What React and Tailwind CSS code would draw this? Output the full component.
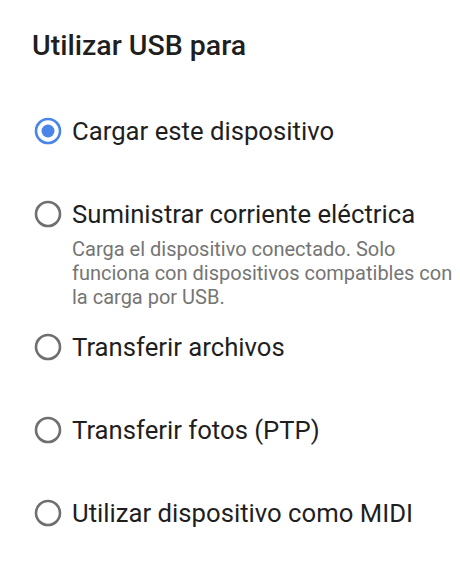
import React, { useState } from 'react';

const options = [
  { id: 'charge', label: 'Cargar este dispositivo' },
  {
    id: 'power',
    label: 'Suministrar corriente eléctrica',
    desc: 'Carga el dispositivo conectado. Solo funciona con dispositivos compatibles con la carga por USB.',
  },
  { id: 'mtp', label: 'Transferir archivos' },
  { id: 'ptp', label: 'Transferir fotos (PTP)' },
  { id: 'midi', label: 'Utilizar dispositivo como MIDI' },
];

const Radio = ({ checked }) => (
  <svg width="28" height="28" viewBox="0 0 28 28" className="shrink-0">
    <circle
      cx="14"
      cy="14"
      r="12"
      fill="none"
      stroke={checked ? '#4a86e8' : '#6f6f6f'}
      strokeWidth="2.6"
    />
    {checked && <circle cx="14" cy="14" r="6.5" fill="#4a86e8" />}
  </svg>
);

export default function App() {
  const [selected, setSelected] = useState('charge');

  return (
    <div
      className="w-[460px] h-[565px] bg-white text-[#1f1f1f] overflow-hidden"
      style={{ fontFamily: 'Roboto, "Noto Sans", sans-serif' }}
    >
      <h1 className="pl-[32px] pt-[28px] text-[28.5px] leading-[36px] font-medium">Utilizar USB para</h1>

      <div className="mt-[52px] pl-[34px] pr-[2px] flex flex-col">
        {options.map((opt, i) => (
          <div
            key={opt.id}
            onClick={() => setSelected(opt.id)}
            className={`cursor-pointer ${i === 0 ? '' : options[i - 1].desc ? 'mt-[23px]' : 'mt-[53px]'}`}
          >
            <div className="flex items-center gap-[10px] h-[30px]">
              <Radio checked={selected === opt.id} />
              <span className="text-[25.7px] leading-[30px] whitespace-nowrap">{opt.label}</span>
            </div>
            {opt.desc && (
              <p className="mt-[8px] pl-[38px] text-[20px] leading-[24px] text-[#757575]">{opt.desc}</p>
            )}
          </div>
        ))}
      </div>
    </div>
  );
}
